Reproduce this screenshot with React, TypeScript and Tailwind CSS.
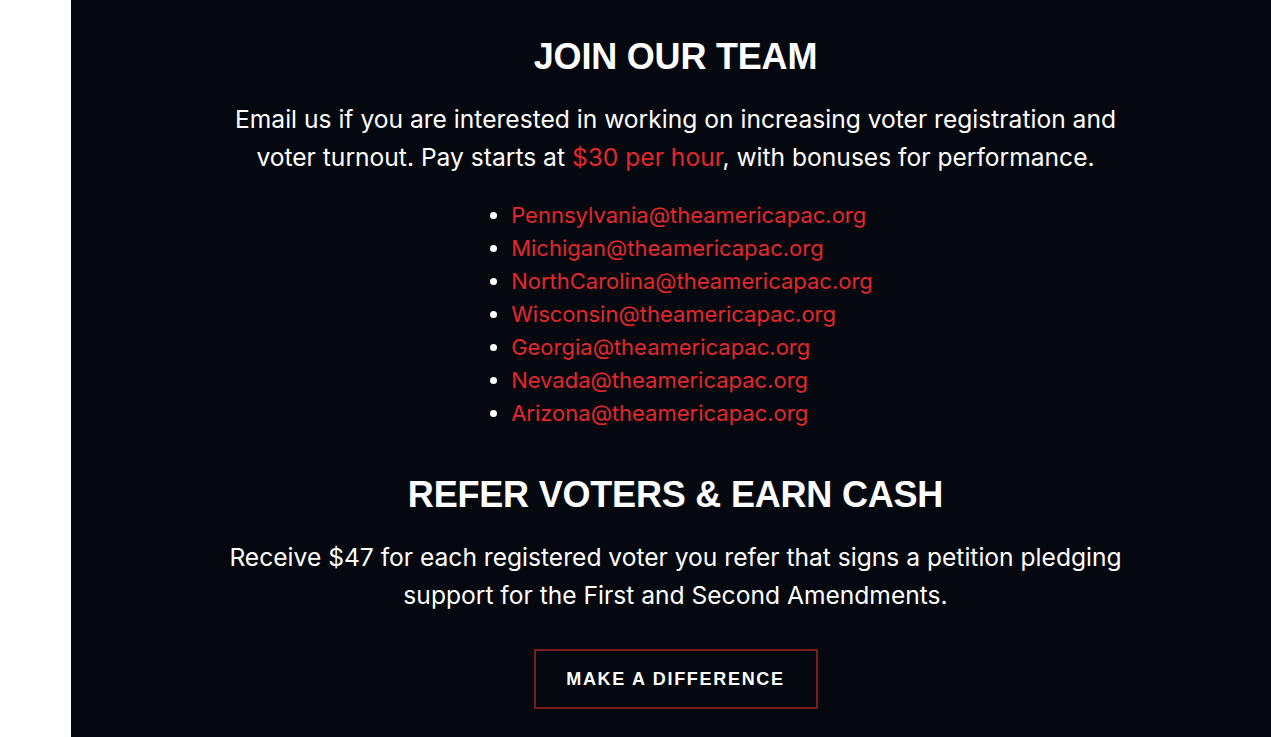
const emails = [
  "Pennsylvania@theamericapac.org",
  "Michigan@theamericapac.org",
  "NorthCarolina@theamericapac.org",
  "Wisconsin@theamericapac.org",
  "Georgia@theamericapac.org",
  "Nevada@theamericapac.org",
  "Arizona@theamericapac.org",
];

const heading = "font-['Liberation_Sans',Arial,sans-serif] text-[36px] leading-[42px] font-bold text-white text-center tracking-[-0.2px]";
const body = "font-['Inter',sans-serif] text-[24.6px] leading-[38px] text-white text-center max-w-[930px] mx-auto";

export default function App() {
  return (
    <div className="flex min-h-[737px] bg-white">
      <div className="w-[71px] shrink-0 bg-white" />
      <main className="flex-1 bg-[#060810] pt-[36px] pb-[30px] pl-[9px]">
        <h2 className={heading}>JOIN OUR TEAM</h2>
        <p className={`${body} mt-[22px]`}>
          Email us if you are interested in working on increasing voter registration and voter turnout. Pay starts at{" "}
          <span className="text-[#e3272b]">$30 per hour</span>, with bonuses for performance.
        </p>
        <ul className="mt-[23px] mx-auto w-fit list-disc pl-[33px] font-['Inter',sans-serif] text-[22px] leading-[33px] text-white marker:text-white">
          {emails.map((email) => (
            <li key={email}>
              <a className="text-[#e3272b]" href={`mailto:${email}`}>
                {email}
              </a>
            </li>
          ))}
        </ul>
        <h2 className={`${heading} mt-[44px]`}>REFER VOTERS &amp; EARN CASH</h2>
        <p className={`${body} mt-[22px]`}>
          Receive $47 for each registered voter you refer that signs a petition pledging support for the First and Second Amendments.
        </p>
        <div className="flex justify-center mt-[35px]">
          <button className="w-[284px] h-[60px] border-2 border-[#7a1b1e] text-white font-['Liberation_Sans',Arial,sans-serif] font-bold text-[18px] tracking-[1.7px]">
            MAKE A DIFFERENCE
          </button>
        </div>
      </main>
    </div>
  );
}
